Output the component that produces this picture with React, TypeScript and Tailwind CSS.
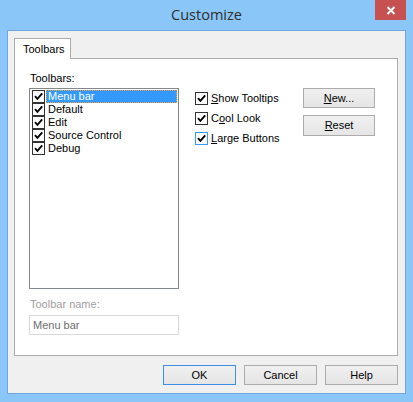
import React from "react";

function Check({ className = "" }: { className?: string }) {
  return (
    <svg viewBox="0 0 11 11" className={className} width="11" height="11">
      <path d="M2 5.2 L4.4 7.8 L9.2 2.4" fill="none" stroke="#000" strokeWidth="1.9" />
    </svg>
  );
}

function Box({ hover = false }: { hover?: boolean }) {
  return (
    <span
      className={
        "w-[13px] h-[13px] shrink-0 bg-white border flex items-center justify-center " +
        (hover ? "border-[#3399ff]" : "border-[#333333]")
      }
    >
      <Check />
    </span>
  );
}

function Btn({ children, primary = false, className = "" }: { children: React.ReactNode; primary?: boolean; className?: string }) {
  return (
    <button
      className={
        "h-[20px] flex items-center justify-center border bg-gradient-to-b from-[#f0f0f0] to-[#e5e5e5] text-black text-[11px] leading-none " +
        (primary ? "border-[#3c8ee6] " : "border-[#acacac] ") +
        className
      }
    >
      {children}
    </button>
  );
}

const toolbars = ["Menu bar", "Default", "Edit", "Source Control", "Debug"];

export default function App() {
  return (
    <div className="w-[413px] h-[402px] bg-[#8bc6f8] flex flex-col relative font-['Liberation_Sans',Arial,sans-serif] text-[11px] text-black select-none">
      {/* title bar */}
      <div className="h-[30px] flex items-center justify-center relative">
        <span className="font-['Open_Sans',sans-serif] text-[14.5px] text-[#2e2e2e] -mt-px">Customize</span>
        <div className="absolute right-[7px] top-0 w-[31px] h-[20px] bg-[#c75050] flex items-center justify-center">
          <svg width="10" height="9" viewBox="0 0 10 9">
            <path d="M1.5 1 L8.5 8 M8.5 1 L1.5 8" stroke="#fff" strokeWidth="2" />
          </svg>
        </div>
      </div>

      {/* client area */}
      <div className="mx-[7px] h-[364px] border border-[#6fa5da] bg-[#f0f0f0] flex flex-col pt-[7px] pl-[6px] pr-[7px]">
        <div className="flex">
          <div className="w-[57px] h-[21px] -mb-px relative z-10 bg-white border border-b-0 border-[#acacac] flex items-center pl-[8px]">
            Toolbars
          </div>
        </div>
        <div className="h-[298px] bg-white border border-[#acacac] flex pl-[14px] pt-[13px]">
          {/* left column */}
          <div className="w-[150px] flex flex-col">
            <div className="h-[13px] leading-[13px] pl-px">Toolbars:</div>
            <div className="mt-[3px] h-[201px] border border-[#828790] bg-white pt-px pl-[2px] pr-px flex flex-col">
              {toolbars.map((t, i) => (
                <div key={t} className="h-[13px] flex items-center">
                  <Box />
                  {i === 0 ? (
                    <span className="ml-px flex-1 h-[13px] bg-[#3399ff] text-white border border-dotted border-[#f5a033] flex items-center pl-px leading-none">
                      {t}
                    </span>
                  ) : (
                    <span className="ml-[3px] leading-none">{t}</span>
                  )}
                </div>
              ))}
            </div>
            <div className="mt-[9px] h-[13px] leading-[13px] pl-px text-[#a0a0a0]">Toolbar name:</div>
            <div className="mt-[4px] h-[20px] border border-[#d9d9d9] flex items-center pl-[3px] text-[#6d6d6d]">
              Menu bar
            </div>
          </div>

          {/* checkboxes */}
          <div className="ml-[16px] w-[108px] mt-[20px] flex flex-col gap-[7px]">
            <label className="h-[13px] flex items-center gap-[3px]">
              <Box />
              <span><u>S</u>how Tooltips</span>
            </label>
            <label className="h-[13px] flex items-center gap-[3px]">
              <Box />
              <span>C<u>o</u>ol Look</span>
            </label>
            <label className="h-[13px] flex items-center gap-[3px]">
              <Box hover />
              <span><u>L</u>arge Buttons</span>
            </label>
          </div>

          {/* side buttons */}
          <div className="mt-[16px] flex flex-col gap-[7px]">
            <Btn className="w-[72px]"><span><u>N</u>ew...</span></Btn>
            <Btn className="w-[72px] h-[21px]"><span><u>R</u>eset</span></Btn>
          </div>
        </div>

        {/* bottom buttons */}
        <div className="mt-[9px] flex justify-end gap-[8px]">
          <Btn primary className="w-[73px]">OK</Btn>
          <Btn className="w-[73px]">Cancel</Btn>
          <Btn className="w-[73px]">Help</Btn>
        </div>
      </div>
    </div>
  );
}
